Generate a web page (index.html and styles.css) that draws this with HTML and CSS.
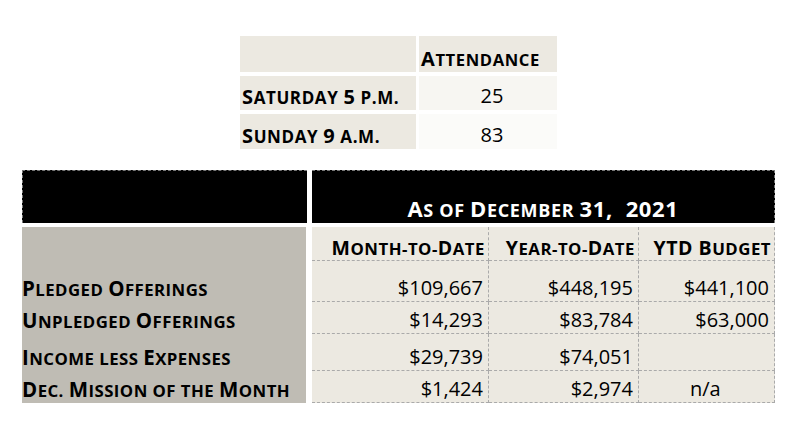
FILE: index.html
```html
<!DOCTYPE html>
<html>
<head>
<meta charset="utf-8">
<link rel="stylesheet" href="styles.css">
</head>
<body>
<div class="att">
  <div class="c lbl"></div>
  <div class="c head sc"><span><b>A</b>ttendance</span></div>
  <div class="c lbl sc"><span><b>S</b>aturday <b>5</b> p.m.</span></div>
  <div class="c num n1">25</div>
  <div class="c lbl sc"><span><b>S</b>unday <b>9</b> a.m.</span></div>
  <div class="c num n2">83</div>
</div>

<div class="fin">
  <div class="hl"></div>
  <div class="hr sc"><span><b>A</b>s of <b>D</b>ecember <b>31,&nbsp; 2021</b></span></div>

  <div class="lab r0"></div>
  <div class="ch sc r0"><span><b>M</b>onth-to-<b>D</b>ate</span></div>
  <div class="ch sc r0"><span><b>Y</b>ear-to-<b>D</b>ate</span></div>
  <div class="ch sc r0"><span><b>YTD B</b>udget</span></div>

  <div class="lab sc r1"><span><b>P</b>ledged <b>O</b>fferings</span></div>
  <div class="v r1">$109,667</div>
  <div class="v r1">$448,195</div>
  <div class="v r1">$441,100</div>

  <div class="lab sc r2"><span><b>U</b>npledged <b>O</b>fferings</span></div>
  <div class="v r2">$14,293</div>
  <div class="v r2">$83,784</div>
  <div class="v r2">$63,000</div>

  <div class="lab sc r3"><span><b>I</b>ncome less <b>E</b>xpenses</span></div>
  <div class="v r3">$29,739</div>
  <div class="v r3">$74,051</div>
  <div class="v r3"></div>

  <div class="lab sc r4"><span><b>D</b>ec. <b>M</b>ission of the <b>M</b>onth</span></div>
  <div class="v r4">$1,424</div>
  <div class="v r4">$2,974</div>
  <div class="v r4 na">n/a</div>
</div>
</body>
</html>
```

FILE: styles.css
```css
html, body {
  margin: 0;
  padding: 0;
  background: #ffffff;
}
body {
  font-family: "Open Sans", Lato, sans-serif;
  color: #000;
}

/* hand-built small caps */
.sc {
  font-weight: 700;
  text-transform: uppercase;
  font-size: 16.8px;
  letter-spacing: 0.45px;
  white-space: nowrap;
  line-height: 1;
}
.sc b {
  font-weight: 700;
  font-size: 20.5px;
}

.att {
  display: grid;
  grid-template-columns: 176px 138px;
  grid-template-rows: 36px 34px 35px;
  column-gap: 3px;
  row-gap: 4px;
  width: 317px;
  margin: 36px 0 0 240px;
}
.c {
  background: #ece9e1;
  display: flex;
  align-items: flex-end;
  box-sizing: border-box;
}
.att .sc {
  font-size: 17px;
  letter-spacing: 0.6px;
}
.att .sc b {
  font-size: 20px;
}
.att .head {
  font-size: 16.6px;
}
.lbl {
  padding: 0 0 3px 2px;
}
.head {
  padding: 0 0 3px 2px;
}
.num {
  justify-content: center;
  font-size: 20px;
  padding: 0 0 1px 8px;
}
.n1 { background: #f7f6f2; }
.n2 { background: #fbfbf9; }

.fin {
  display: grid;
  grid-template-columns: 290px 177px 150px 136px;
  width: 753px;
  margin: 21px 0 0 22px;
}
.hl, .hr {
  background: #000;
  height: 53px;
  margin-bottom: 4px;
  box-sizing: border-box;
  border-top: 1px dashed #777;
}
.hl {
  margin-right: 5px;
  border-left: 1px dashed #777;
}
.hr {
  grid-column: 2 / 5;
  color: #fff;
  display: flex;
  align-items: flex-end;
  justify-content: center;
  padding-bottom: 4px;
  border-right: 1px dashed #777;
}
.hr.sc {
  font-size: 18px;
  letter-spacing: 0.65px;
}
.hr.sc b {
  font-size: 22px;
}
.lab {
  background: #bfbcb4;
  margin-right: 6px;
  display: flex;
  align-items: flex-end;
  padding: 0 0 3px 0;
  box-sizing: border-box;
}
.ch, .v {
  background: #ece9e1;
  border-right: 1px dashed #aaa;
  border-bottom: 1px dashed #aaa;
  box-sizing: border-box;
  display: flex;
  align-items: flex-end;
  justify-content: flex-end;
  padding: 0 3px 2px 0;
  white-space: nowrap;
}
.ch.sc {
  font-size: 16.8px;
  letter-spacing: 0.5px;
}
.ch.sc b {
  font-size: 19.5px;
}
.v {
  font-size: 20px;
  padding: 0 5px 0 0;
}
.na {
  justify-content: flex-start;
  padding-left: 51px;
}
.r0 { height: 34px; }
.r1 { height: 41px; }
.r2 { height: 32px; }
.r3 { height: 37px; }
.r4 { height: 32px; }
```
